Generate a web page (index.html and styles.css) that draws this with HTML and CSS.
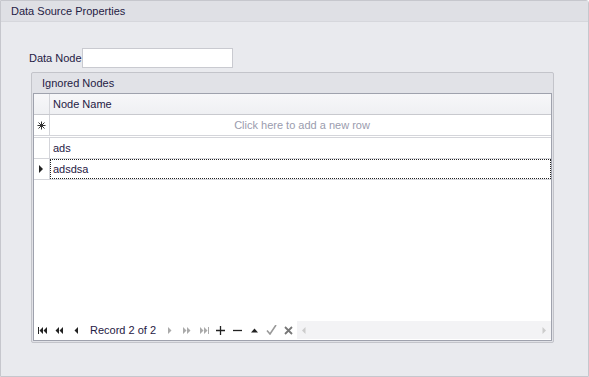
FILE: index.html
```html
<!DOCTYPE html>
<html lang="en">
<head>
    <meta charset="UTF-8">
    <title>Data Source Properties</title>
    <link rel="stylesheet" href="styles.css">
</head>
<body>

<div class="panel">
    <div class="panel-head">Data Source Properties</div>
    <div class="panel-body">
        <div class="field">
            <label class="field-label">Data Node</label>
            <input type="text" class="field-input">
        </div>

        <div class="group">
            <div class="group-head">Ignored Nodes</div>
            <div class="grid">
                <div class="row head-row">
                    <div class="ind"></div>
                    <div class="cell">Node Name</div>
                </div>
                <div class="row new-row">
                    <div class="ind">
                        <svg width="9" height="9" viewBox="0 0 9 9"><path d="M4.5 0.5v8M0.5 4.5h8M1.5 1.5l6 6M7.5 1.5l-6 6" stroke="#333" stroke-width="1"/></svg>
                    </div>
                    <div class="cell hint">Click here to add a new row</div>
                </div>
                <div class="row data-row">
                    <div class="ind"></div>
                    <div class="cell">ads</div>
                </div>
                <div class="row data-row">
                    <div class="ind">
                        <svg width="5" height="8" viewBox="0 0 5 8"><path d="M0 0l4 4-4 4z" fill="#222"/></svg>
                    </div>
                    <div class="cell focused">adsdsa</div>
                </div>
                <div class="grid-fill"></div>
                <div class="nav">
                    <span class="nav-btn"><svg width="10" height="7" viewBox="0 0 10 7"><path d="M0 0h1v7H0zM5 0v7L1.5 3.5zM9 0v7L5.5 3.5z" fill="#222"/></svg></span>
                    <span class="nav-btn"><svg width="9" height="7" viewBox="0 0 9 7"><path d="M4 0v7L0.5 3.5zM8 0v7L4.5 3.5z" fill="#222"/></svg></span>
                    <span class="nav-btn"><svg width="5" height="7" viewBox="0 0 5 7"><path d="M4 0v7L0.5 3.5z" fill="#222"/></svg></span>
                    <span class="nav-text">Record 2 of 2</span>
                    <span class="nav-btn"><svg width="5" height="7" viewBox="0 0 5 7"><path d="M1 0v7l3.5-3.5z" fill="#aaa"/></svg></span>
                    <span class="nav-btn"><svg width="9" height="7" viewBox="0 0 9 7"><path d="M1 0v7l3.5-3.5zM5 0v7l3.5-3.5z" fill="#aaa"/></svg></span>
                    <span class="nav-btn"><svg width="10" height="7" viewBox="0 0 10 7"><path d="M1 0v7l3.5-3.5zM5 0v7l3.5-3.5zM9 0h1v7H9z" fill="#aaa"/></svg></span>
                    <span class="nav-btn"><svg width="9" height="9" viewBox="0 0 9 9"><path d="M4.5 0v9M0 4.5h9" stroke="#222" stroke-width="1.3"/></svg></span>
                    <span class="nav-btn"><svg width="9" height="9" viewBox="0 0 9 9"><path d="M0 4.5h9" stroke="#222" stroke-width="1.3"/></svg></span>
                    <span class="nav-btn"><svg width="7" height="5" viewBox="0 0 7 5"><path d="M0 4.5L3.5 0.5 7 4.5z" fill="#222"/></svg></span>
                    <span class="nav-btn"><svg width="11" height="10" viewBox="0 0 11 10"><path d="M1 5.5l3 3.5 6-9" stroke="#999" stroke-width="1.6" fill="none"/></svg></span>
                    <span class="nav-btn"><svg width="9" height="9" viewBox="0 0 9 9"><path d="M1 1l7 7M8 1l-7 7" stroke="#777" stroke-width="1.8"/></svg></span>
                    <div class="hscroll">
                        <svg width="4" height="7" viewBox="0 0 4 7"><path d="M3.5 0v7L0 3.5z" fill="#ccc"/></svg>
                        <svg width="4" height="7" viewBox="0 0 4 7"><path d="M0.5 0v7L4 3.5z" fill="#ccc"/></svg>
                    </div>
                </div>
            </div>
        </div>
    </div>
</div>

</body>
</html>
```

FILE: styles.css
```css
html, body {
    margin: 0;
    padding: 0;
}
body {
    width: 589px;
    height: 377px;
    font-family: "Liberation Sans", Arial, sans-serif;
    font-size: 11px;
    color: #1f2044;
}
.panel {
    width: 589px;
    height: 377px;
    box-sizing: border-box;
    background-color: #e9eaee;
    border: 1px solid #c6c7cd;
    border-top-right-radius: 3px;
    display: flex;
    flex-direction: column;
}
.panel-head {
    height: 20px;
    line-height: 20px;
    padding-left: 10px;
    background-color: #dfe0e5;
    border-bottom: 1px solid #d6d7dc;
}
.panel-body {
    padding: 26px 34px 0 28px;
}
.field {
    display: flex;
    align-items: center;
}
.field-label {
    white-space: nowrap;
    width: 53px;
}
.field-input {
    width: 151px;
    height: 20px;
    box-sizing: border-box;
    margin: 0;
    border: 1px solid #c9cad0;
    background-color: #fff;
}
.group {
    margin-top: 4px;
    margin-left: 2px;
    width: 523px;
    height: 271px;
    box-sizing: border-box;
    border: 1px solid #c3c4ca;
    border-radius: 2px;
    background-color: #e1e2e7;
    padding: 0 1px 1px 1px;
    display: flex;
    flex-direction: column;
}
.group-head {
    height: 20px;
    line-height: 20px;
    padding-left: 9px;
}
.grid {
    flex: 1;
    display: flex;
    flex-direction: column;
    background-color: #fff;
    border: 1px solid #9fa2ad;
}
.row {
    display: flex;
    height: 20px;
    border-bottom: 1px solid #d4d5da;
}
.ind {
    width: 15px;
    flex: none;
    border-right: 1px solid #d4d5da;
    background-color: #f4f4f6;
    display: flex;
    align-items: center;
    justify-content: center;
}
.cell {
    flex: 1;
    padding-left: 3px;
    line-height: 20px;
}
.head-row {
    background: linear-gradient(#f7f7f9, #eff0f3);
    border-bottom: 1px solid #c8c9ce;
}
.head-row .ind {
    background: none;
}
.new-row {
    border-bottom: 3px double #d4d5da;
    height: 20px;
}
.new-row .ind {
    background-color: #fff;
}
.hint {
    text-align: center;
    color: #9a9cae;
}
.data-row .ind {
    background-color: #fff;
}
.focused {
    border: 1px dotted #222;
    line-height: 18px;
    padding-left: 2px;
}
.grid-fill {
    flex: 1;
}
.nav {
    height: 18px;
    display: flex;
    align-items: center;
    margin-bottom: 1px;
}
.nav-btn {
    width: 17px;
    height: 18px;
    flex: none;
    display: flex;
    align-items: center;
    justify-content: center;
}
.nav-text {
    padding: 0 5px 0 5px;
}
.hscroll {
    flex: 1;
    align-self: stretch;
    background-color: #f3f3f5;
    display: flex;
    align-items: center;
    justify-content: space-between;
    padding: 0 5px 0 5px;
}
```
